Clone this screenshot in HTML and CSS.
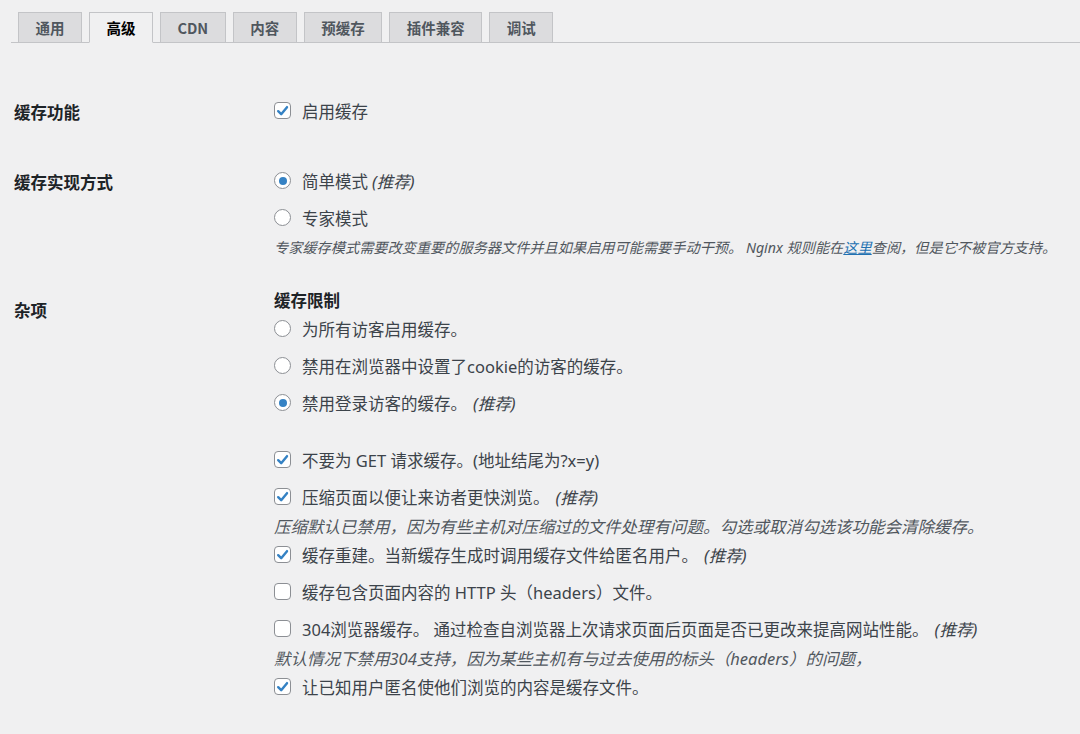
FILE: index.html
```html
<!DOCTYPE html>
<html lang="zh-CN">
<head>
<meta charset="utf-8">
<title>高级</title>
<link rel="stylesheet" href="styles.css">
</head>
<body>
<nav class="tabs">
  <a class="tab">通用</a>
  <a class="tab active">高级</a>
  <a class="tab">CDN</a>
  <a class="tab">内容</a>
  <a class="tab">预缓存</a>
  <a class="tab">插件兼容</a>
  <a class="tab">调试</a>
</nav>

<div class="form">
  <div class="row">
    <div class="th">缓存功能</div>
    <div class="td">
      <label class="opt"><span class="cb on"><svg viewBox="0 0 16 16"><path d="M3.4 8.2 L6.6 11.4 L12.8 3.9"/></svg></span>启用缓存</label>
    </div>
  </div>

  <div class="row">
    <div class="th">缓存实现方式</div>
    <div class="td">
      <label class="opt"><span class="rb on"></span>简单模式 <em>(推荐)</em></label>
      <label class="opt"><span class="rb"></span>专家模式</label>
      <p class="desc">专家缓存模式需要改变重要的服务器文件并且如果启用可能需要手动干预。 Nginx 规则能在<a href="#">这里</a>查阅，但是它不被官方支持。</p>
    </div>
  </div>

  <div class="row">
    <div class="th">杂项</div>
    <div class="td">
      <div class="sub">缓存限制</div>
      <label class="opt"><span class="rb"></span>为所有访客启用缓存。</label>
      <label class="opt"><span class="rb"></span>禁用在浏览器中设置了cookie的访客的缓存。</label>
      <label class="opt"><span class="rb on"></span>禁用登录访客的缓存。 <em class="rec">(推荐)</em></label>

      <div class="group">
        <label class="opt"><span class="cb on"><svg viewBox="0 0 16 16"><path d="M3.4 8.2 L6.6 11.4 L12.8 3.9"/></svg></span>不要为 GET 请求缓存。(地址结尾为?x=y)</label>
        <label class="opt"><span class="cb on"><svg viewBox="0 0 16 16"><path d="M3.4 8.2 L6.6 11.4 L12.8 3.9"/></svg></span>压缩页面以便让来访者更快浏览。 <em class="rec">(推荐)</em></label>
        <p class="desc big">压缩默认已禁用，因为有些主机对压缩过的文件处理有问题。勾选或取消勾选该功能会清除缓存。</p>
        <label class="opt"><span class="cb on"><svg viewBox="0 0 16 16"><path d="M3.4 8.2 L6.6 11.4 L12.8 3.9"/></svg></span>缓存重建。当新缓存生成时调用缓存文件给匿名用户。 <em class="rec">(推荐)</em></label>
        <label class="opt"><span class="cb"></span>缓存包含页面内容的 HTTP 头（headers）文件。</label>
        <label class="opt"><span class="cb"></span>304浏览器缓存。 通过检查自浏览器上次请求页面后页面是否已更改来提高网站性能。 <em class="rec">(推荐)</em></label>
        <p class="desc big">默认情况下禁用304支持，因为某些主机有与过去使用的标头（headers）的问题，</p>
        <label class="opt"><span class="cb on"><svg viewBox="0 0 16 16"><path d="M3.4 8.2 L6.6 11.4 L12.8 3.9"/></svg></span>让已知用户匿名使他们浏览的内容是缓存文件。</label>
      </div>
    </div>
  </div>
</div>
</body>
</html>
```

FILE: styles.css
```css
html, body {
  margin: 0;
  padding: 0;
  background: #f0f0f1;
}
body {
  font-family: "Noto Sans", "Noto Sans CJK SC", sans-serif;
  color: #3c434a;
  font-size: 16.5px;
}

.tabs {
  display: flex;
  gap: 7px;
  margin: 12px 0 0 11px;
  padding-left: 7px;
  border-bottom: 1px solid #c3c4c7;
  height: 30px;
}
.tab {
  box-sizing: border-box;
  height: 31px;
  padding: 0 16.5px;
  border: 1px solid #c3c4c7;
  background: #dcdcde;
  color: #50575e;
  font-family: "Noto Sans CJK SC", sans-serif;
  font-size: 14.5px;
  font-weight: 700;
  line-height: 30px;
  text-decoration: none;
}
.tab.active {
  background: #f0f0f1;
  border-bottom-color: #f0f0f1;
  color: #000;
}

.form {
  padding: 49px 0 0 14px;
}
.row {
  display: flex;
  margin-bottom: 33px;
}
.th {
  width: 260px;
  flex-shrink: 0;
  padding-top: 8px;
  line-height: 24px;
  font-family: "Noto Sans CJK SC", sans-serif;
  font-weight: 700;
  color: #1d2327;
}
.td {
  flex: 1;
}
.opt {
  display: flex;
  align-items: center;
  height: 37px;
  white-space: nowrap;
}
.opt em {
  margin-left: 4px;
}
.opt em.rec {
  margin-left: 6px;
}
em {
  font-style: italic;
}

.cb, .rb {
  box-sizing: border-box;
  width: 17px;
  height: 17px;
  margin-right: 11px;
  flex-shrink: 0;
  background: #fff;
  border: 1px solid #8c8f94;
  display: inline-flex;
  align-items: center;
  justify-content: center;
}
.cb {
  border-radius: 4px;
}
.cb svg {
  width: 16px;
  height: 16px;
}
.cb svg path {
  fill: none;
  stroke: #3582c4;
  stroke-width: 2.6;
  stroke-linecap: round;
  stroke-linejoin: round;
}
.rb {
  border-radius: 50%;
}
.rb.on::after {
  content: "";
  width: 8px;
  height: 8px;
  border-radius: 50%;
  background: #3582c4;
}

.desc {
  margin: 2px 0 -1px;
  line-height: 20px;
  font-size: 14.2px;
  font-style: italic;
  color: #50575e;
  white-space: nowrap;
}
.desc.big {
  font-size: 16.5px;
}
.desc a {
  color: #2271b1;
  text-decoration: underline;
}

.sub {
  height: 20px;
  line-height: 20px;
  font-family: "Noto Sans CJK SC", sans-serif;
  font-weight: 700;
  color: #1d2327;
}
.group {
  margin-top: 20px;
}
```
